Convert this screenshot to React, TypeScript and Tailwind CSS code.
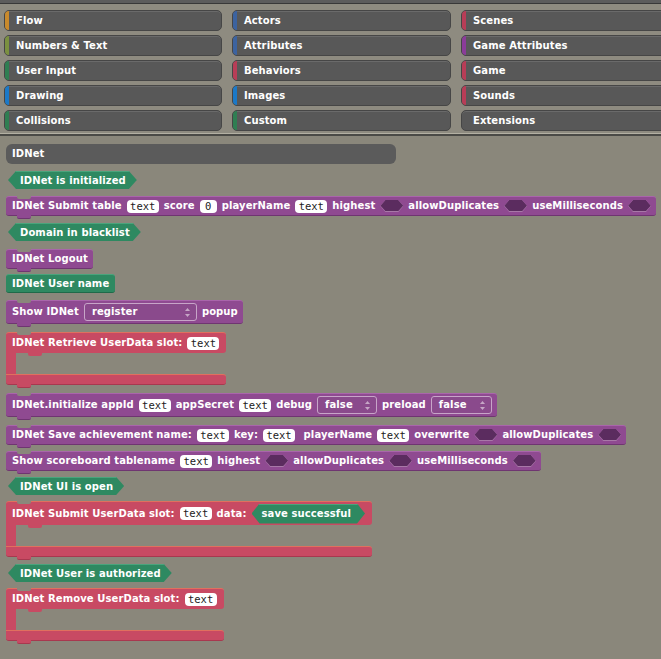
import React from "react";

const PAGE = "bg-[#8a877b]";

type CatProps = { label: string; stripe?: string };

// category buttons in the palette header
const Cat = ({ label, stripe }: CatProps) => (
  <div className="relative h-[21px] rounded-[5px] bg-[#585858] border border-[#464646] shadow-[inset_0_1px_0_#6a6a6a] flex items-center pl-[11px] overflow-hidden">
    {stripe && <span className={`absolute left-0 top-0 bottom-0 w-[4px] ${stripe}`} />}
    <span className="text-white font-bold text-[10px] tracking-[0.1px] leading-none">{label}</span>
  </div>
);

const categories: CatProps[] = [
  { label: "Flow", stripe: "bg-[#c98a2c]" },
  { label: "Actors", stripe: "bg-[#3c63a0]" },
  { label: "Scenes", stripe: "bg-[#b83d57]" },
  { label: "Numbers & Text", stripe: "bg-[#7b9040]" },
  { label: "Attributes", stripe: "bg-[#3c63a0]" },
  { label: "Game Attributes", stripe: "bg-[#8b3c99]" },
  { label: "User Input", stripe: "bg-[#2f7e52]" },
  { label: "Behaviors", stripe: "bg-[#b83d57]" },
  { label: "Game", stripe: "bg-[#b83d57]" },
  { label: "Drawing", stripe: "bg-[#1b79c8]" },
  { label: "Images", stripe: "bg-[#1b79c8]" },
  { label: "Sounds", stripe: "bg-[#b83d57]" },
  { label: "Collisions", stripe: "bg-[#2f7e52]" },
  { label: "Custom", stripe: "bg-[#2f7e52]" },
  { label: "Extensions" },
];

const T = ({ children }: { children: React.ReactNode }) => (
  <span className="text-white font-bold text-[10px] tracking-[0.1px] leading-none whitespace-nowrap">{children}</span>
);

const Input = ({ value = "text" }: { value?: string }) => (
  <span
    className={`h-[13px] ${value === "0" ? "w-[17px]" : "w-[32px]"} rounded-[4px] bg-white flex items-center justify-center font-['DejaVu_Sans_Mono',monospace] text-[10.5px] text-[#222] leading-none`}
  >
    {value}
  </span>
);

const Slot = () => (
  <span className="relative w-[23px] h-[12px] bg-[#a878a8] [clip-path:polygon(5px_0,calc(100%_-_5px)_0,100%_50%,calc(100%_-_5px)_100%,5px_100%,0_50%)]">
    <span className="absolute inset-x-0 top-0 bottom-[1px] bg-[#5b2c5f] [clip-path:polygon(5px_0,calc(100%_-_5px)_0,100%_50%,calc(100%_-_5px)_100%,5px_100%,0_50%)]" />
  </span>
);

const Arrows = () => (
  <svg width="5" height="9" viewBox="0 0 5 9" className="ml-auto">
    <path d="M2.5 0 L5 3 L0 3 Z" fill="#c6a6c6" />
    <path d="M2.5 9 L5 6 L0 6 Z" fill="#c6a6c6" />
  </svg>
);

const Dropdown = ({ value, w }: { value: string; w: string }) => (
  <span className={`h-[18px] ${w} rounded-[3px] border border-[#c7a5c8] bg-[#8a4a8c] flex items-center pl-[7px] pr-[6px]`}>
    <T>{value}</T>
    <Arrows />
  </span>
);

// purple command block with notch and tab
const Cmd = ({ children, h = "h-[20px]", mt }: { children: React.ReactNode; h?: string; mt: string }) => (
  <div className={`relative self-start ${mt} ${h} flex items-center gap-[5px] pl-[6px] pr-[5px] rounded-[3px] bg-[#8f4a91] border-t border-t-[#a965ab] border-b border-b-[#6f3571]`}>
    <span className={`absolute left-[11px] -top-[1px] w-[14px] h-[3px] ${PAGE} rounded-b-[2px]`} />
    <span className="absolute left-[11px] -bottom-[4px] w-[14px] h-[4px] bg-[#8f4a91] border-b border-b-[#6f3571] rounded-b-[2px]" />
    {children}
  </div>
);

const Hex = ({ children, mt }: { children: React.ReactNode; mt: string }) => (
  <div className={`self-start ml-[2px] ${mt} h-[18px] flex items-center pl-[12px] pr-[11px] bg-[#2e8961] border-t border-t-[#4aa47c] [clip-path:polygon(8px_0,calc(100%_-_8px)_0,100%_50%,calc(100%_-_8px)_100%,8px_100%,0_50%)]`}>
    <T>{children}</T>
  </div>
);

const CBlock = ({ children, mt, top = "h-[21px]" }: { children: React.ReactNode; mt: string; top?: string }) => (
  <div className={`relative self-start ${mt} flex flex-col`}>
    <div className={`relative ${top} flex items-center gap-[5px] pl-[6px] pr-[7px] rounded-t-[3px] rounded-br-[3px] bg-[#c84a63] border-t border-t-[#e0705e]`}>
      <span className={`absolute left-[11px] -top-[1px] w-[14px] h-[3px] ${PAGE} rounded-b-[2px]`} />
      <span className="absolute left-[22px] -bottom-[3px] w-[14px] h-[3px] bg-[#c84a63] rounded-b-[2px]" />
      {children}
    </div>
    <div className="h-[21px] w-[10px] bg-[#c84a63]" />
    <div className="relative h-[11px] rounded-b-[3px] rounded-tr-[3px] bg-[#c84a63] border-t border-t-[#e0705e] border-b border-b-[#a8384f]">
      <span className="absolute left-[11px] -bottom-[4px] w-[14px] h-[4px] bg-[#c84a63] border-b border-b-[#a8384f] rounded-b-[2px]" />
    </div>
  </div>
);

export default function App() {
  return (
    <div className={`w-[661px] h-[659px] overflow-hidden ${PAGE} font-['DejaVu_Sans',sans-serif]`}>
      <div className="h-[4px] bg-[#5c5c5c] border-b border-[#383838]" />
      <div className="h-[130px] pt-[6px] pl-[4px] bg-[#8e8b80] border-b border-[#b3b0a3]">
        <div className="grid grid-cols-[218px_219px_230px] gap-x-[10px] gap-y-[4px]">
          {categories.map((c) => (
            <Cat key={c.label} {...c} />
          ))}
        </div>
      </div>
      <div className="h-[2px] bg-[#4a4a46]" />

      <div className="flex flex-col pl-[6px]">
        <div className="mt-[8px] w-[390px] h-[20px] rounded-[6px] bg-[#5b5b5b] flex items-center pl-[6px]">
          <T>IDNet</T>
        </div>

        <Hex mt="mt-[7px]">IDNet is initialized</Hex>

        <Cmd mt="mt-[7px]">
          <T>IDNet Submit table</T>
          <Input />
          <T>score</T>
          <Input value="0" />
          <T>playerName</T>
          <Input />
          <T>highest</T>
          <Slot />
          <T>allowDuplicates</T>
          <Slot />
          <T>useMilliseconds</T>
          <Slot />
        </Cmd>

        <Hex mt="mt-[7px]">Domain in blacklist</Hex>

        <Cmd mt="mt-[8px]">
          <T>IDNet Logout</T>
        </Cmd>

        <div className="self-start mt-[5px] h-[19px] flex items-center px-[6px] rounded-[3px] bg-[#2e8961] border-t border-t-[#4aa47c] border-b border-b-[#1f6a49]">
          <T>IDNet User name</T>
        </div>

        <Cmd mt="mt-[7px]" h="h-[24px]">
          <T>Show IDNet</T>
          <Dropdown value="register" w="w-[113px]" />
          <T>popup</T>
        </Cmd>

        <CBlock mt="mt-[8px]">
          <T>IDNet Retrieve UserData slot:</T>
          <Input />
        </CBlock>

        <Cmd mt="mt-[8px]" h="h-[24px]">
          <T>IDNet.initialize appId</T>
          <Input />
          <T>appSecret</T>
          <Input />
          <T>debug</T>
          <Dropdown value="false" w="w-[60px]" />
          <T>preload</T>
          <Dropdown value="false" w="w-[61px]" />
        </Cmd>

        <Cmd mt="mt-[8px]">
          <T>IDNet Save achievement name:</T>
          <Input />
          <T>key:</T>
          <Input />
          <T>&nbsp;playerName</T>
          <Input />
          <T>overwrite</T>
          <Slot />
          <T>allowDuplicates</T>
          <Slot />
        </Cmd>

        <Cmd mt="mt-[6px]">
          <T>Show scoreboard tablename</T>
          <Input />
          <T>highest</T>
          <Slot />
          <T>allowDuplicates</T>
          <Slot />
          <T>useMilliseconds</T>
          <Slot />
        </Cmd>

        <Hex mt="mt-[6px]">IDNet UI is open</Hex>

        <CBlock mt="mt-[6px]" top="h-[24px]">
          <T>IDNet Submit UserData slot:</T>
          <Input />
          <T>data:</T>
          <div className="h-[20px] flex items-center pl-[10px] pr-[14px] bg-[#2e8961] border-t border-t-[#4aa47c] [clip-path:polygon(8px_0,calc(100%_-_8px)_0,100%_50%,calc(100%_-_8px)_100%,8px_100%,0_50%)]">
            <T>save successful</T>
          </div>
        </CBlock>

        <Hex mt="mt-[7px]">IDNet User is authorized</Hex>

        <CBlock mt="mt-[6px]">
          <T>IDNet Remove UserData slot:</T>
          <Input />
        </CBlock>
      </div>
    </div>
  );
}
